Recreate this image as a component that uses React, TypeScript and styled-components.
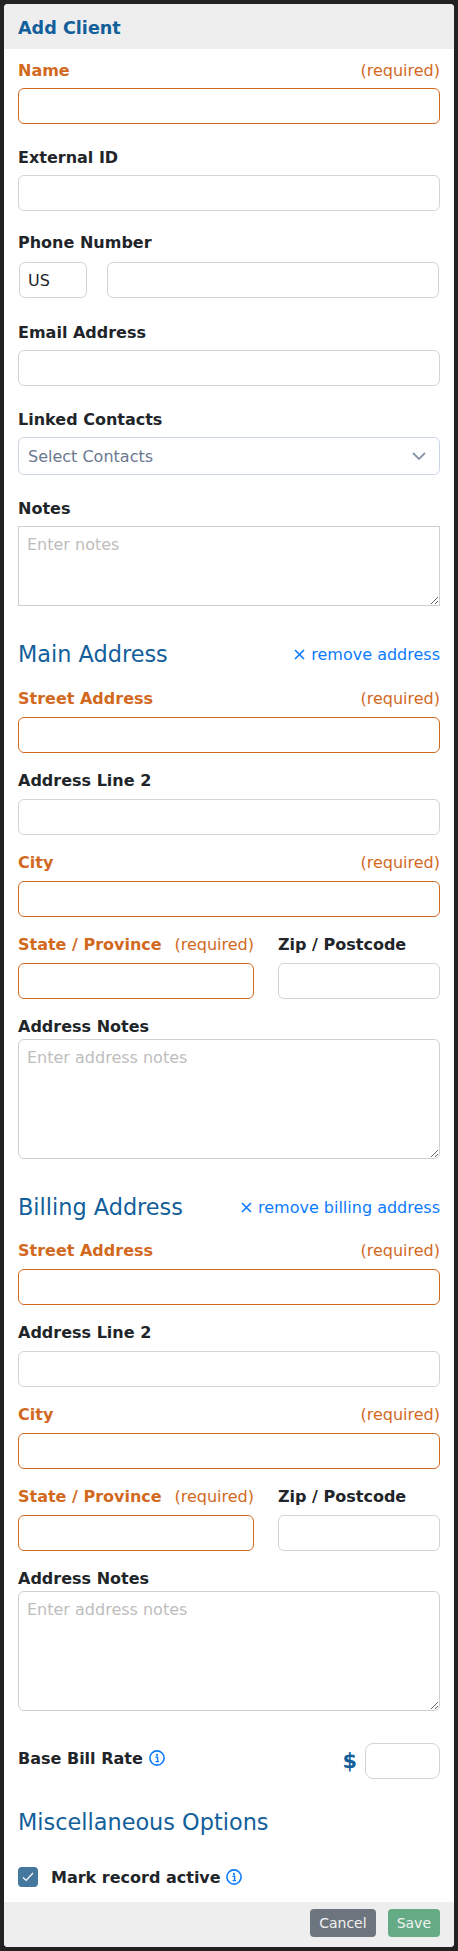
import React from "react";
import styled, { createGlobalStyle } from "styled-components";

const GlobalStyle = createGlobalStyle`
    * {
        box-sizing: border-box;
    }
    body {
        margin: 0;
        background: #222;
        font-family: "DejaVu Sans", sans-serif;
        color: #212529;
    }
`;

const Modal = styled.form`
    width: 458px;
    height: 1951px;
    border: 4px solid #222;
    border-radius: 8px;
    background: #fff;
    display: flex;
    flex-direction: column;
    overflow: hidden;
`;

const Header = styled.div`
    height: 45px;
    padding: 3px 14px 0;
    display: flex;
    align-items: center;
    background: #eee;
`;

const Title = styled.h5`
    margin: 0;
    font-size: 17.6px;
    font-weight: 700;
    color: #135f9b;
`;

const Body = styled.div`
    flex: 1;
    padding: 9px 14px 0;
`;

const Field = styled.div<{ $after?: number }>`
    margin-bottom: ${(p) => (p.$after === undefined ? 21 : p.$after)}px;
`;

const LabelRow = styled.div<{ $required?: boolean; $below?: number }>`
    height: 24px;
    margin-bottom: ${(p) => (p.$below === undefined ? 6 : p.$below)}px;
    display: flex;
    align-items: center;
    justify-content: space-between;
    font-size: 16px;
    color: ${(p) => (p.$required ? "#d2691e" : "#212529")};
`;

const LabelText = styled.label`
    font-weight: 700;
`;

const Required = styled.span`
    font-size: 16px;
`;

const Input = styled.input<{ $required?: boolean }>`
    display: block;
    width: 100%;
    height: 36px;
    padding: 0 8px;
    border: 1px solid ${(p) => (p.$required ? "#d2691e" : "#d4d4d4")};
    border-radius: 6px;
    outline: none;
    background: #fff;
    font-family: inherit;
    font-size: 16px;
    color: #212529;
`;

const PhoneRow = styled.div`
    display: flex;
    gap: 20px;
    padding: 0 1px;
`;

const CountryInput = styled(Input)`
    width: 68px;
    flex: none;
`;

const Select = styled.div`
    height: 38px;
    padding: 0 13px 0 9px;
    display: flex;
    align-items: center;
    justify-content: space-between;
    border: 1px solid #ccd5e5;
    border-radius: 6px;
    font-size: 16px;
    color: #6b7890;
`;

const Textarea = styled.textarea<{ $square?: boolean; $height: number }>`
    display: block;
    width: 100%;
    height: ${(p) => p.$height}px;
    padding: 7px 8px;
    border: 1px solid #d0d0d0;
    border-radius: ${(p) => (p.$square ? 0 : 6)}px;
    outline: none;
    font-family: inherit;
    font-size: 16px;
    line-height: 1.4;
    &::placeholder {
        color: #bdbdbd;
        opacity: 1;
    }
`;

const SectionHead = styled.div<{ $top: number; $bottom: number }>`
    height: 30px;
    margin-top: ${(p) => p.$top}px;
    margin-bottom: ${(p) => p.$bottom}px;
    display: flex;
    align-items: center;
    justify-content: space-between;
`;

const SectionTitle = styled.h4`
    margin: 0;
    font-size: 22.4px;
    font-weight: 400;
    color: #135f9b;
`;

const RemoveLink = styled.a`
    display: flex;
    align-items: center;
    gap: 6px;
    font-size: 16px;
    color: #0d7bff;
`;

const Columns = styled.div`
    display: flex;
    justify-content: space-between;
`;

const StateColumn = styled.div`
    width: 236px;
`;

const ZipColumn = styled.div`
    width: 162px;
`;

const RateRow = styled.div`
    display: flex;
    align-items: center;
    justify-content: space-between;
    margin-top: 32px;
`;

const RateLabel = styled.label`
    display: flex;
    align-items: center;
    gap: 6px;
    margin-bottom: 6px;
    font-size: 16px;
    font-weight: 700;
`;

const RateInputWrap = styled.div`
    display: flex;
    align-items: center;
    gap: 8px;
`;

const Dollar = styled.span`
    font-size: 20.8px;
    font-weight: 700;
    color: #135f9b;
`;

const RateInput = styled(Input)`
    width: 75px;
    border-radius: 8px;
`;

const CheckRow = styled.div`
    display: flex;
    align-items: center;
`;

const CheckBox = styled.span`
    width: 20px;
    height: 20px;
    margin-right: 13px;
    display: flex;
    align-items: center;
    justify-content: center;
    border-radius: 4px;
    background: #44789f;
`;

const CheckLabel = styled.label`
    display: flex;
    align-items: center;
    gap: 5px;
    font-size: 16px;
    font-weight: 700;
`;

const Footer = styled.div`
    height: 45px;
    padding: 7px 14px 0;
    display: flex;
    justify-content: flex-end;
    align-items: flex-start;
    gap: 12px;
    background: #eee;
`;

const Button = styled.button<{ $color: string }>`
    height: 28px;
    padding: 0 9px;
    border: none;
    border-radius: 4px;
    background: ${(p) => p.$color};
    color: #f2f2f2;
    font-family: inherit;
    font-size: 14px;
`;

const InfoIcon = () => (
    <svg width="16" height="16" viewBox="0 0 16 16" fill="none">
        <circle cx="8" cy="8" r="7.1" stroke="#0d7bff" strokeWidth="1.6" />
        <circle cx="8" cy="4.9" r="1.1" fill="#0d7bff" />
        <path
            d="M6.5 7.2H8.6V11.2M6.5 11.6H10"
            stroke="#0d7bff"
            strokeWidth="1.4"
        />
    </svg>
);

const CrossIcon = () => (
    <svg width="11" height="11" viewBox="0 0 11 11" fill="none">
        <path d="M1 1L10 10M10 1L1 10" stroke="#0d7bff" strokeWidth="1.6" />
    </svg>
);

const ChevronIcon = () => (
    <svg width="14" height="8" viewBox="0 0 14 8" fill="none">
        <path d="M1 1L7 7L13 1" stroke="#8a96a8" strokeWidth="1.8" />
    </svg>
);

const CheckIcon = () => (
    <svg width="12" height="10" viewBox="0 0 12 10" fill="none">
        <path d="M1 5.5L4.2 8.5L11 1" stroke="#fff" strokeWidth="1.2" />
    </svg>
);

function AddressFields() {
    return (
        <>
            <Field $after={15}>
                <LabelRow $required $below={7}>
                    <LabelText>Street Address</LabelText>
                    <Required>(required)</Required>
                </LabelRow>
                <Input $required />
            </Field>
            <Field $after={15}>
                <LabelRow $below={7}>
                    <LabelText>Address Line 2</LabelText>
                </LabelRow>
                <Input />
            </Field>
            <Field $after={15}>
                <LabelRow $required $below={7}>
                    <LabelText>City</LabelText>
                    <Required>(required)</Required>
                </LabelRow>
                <Input $required />
            </Field>
            <Field $after={15}>
                <Columns>
                    <StateColumn>
                        <LabelRow $required $below={7}>
                            <LabelText>State / Province</LabelText>
                            <Required>(required)</Required>
                        </LabelRow>
                        <Input $required />
                    </StateColumn>
                    <ZipColumn>
                        <LabelRow $below={7}>
                            <LabelText>Zip / Postcode</LabelText>
                        </LabelRow>
                        <Input />
                    </ZipColumn>
                </Columns>
            </Field>
            <Field $after={0}>
                <LabelRow $below={1}>
                    <LabelText>Address Notes</LabelText>
                </LabelRow>
                <Textarea $height={120} placeholder="Enter address notes" />
            </Field>
        </>
    );
}

function App() {
    return (
        <>
            <GlobalStyle />
            <Modal>
                <Header>
                    <Title>Add Client</Title>
                </Header>
                <Body>
                    <Field>
                        <LabelRow $required>
                            <LabelText>Name</LabelText>
                            <Required>(required)</Required>
                        </LabelRow>
                        <Input $required />
                    </Field>
                    <Field $after={19}>
                        <LabelRow>
                            <LabelText>External ID</LabelText>
                        </LabelRow>
                        <Input />
                    </Field>
                    <Field $after={22}>
                        <LabelRow $below={8}>
                            <LabelText>Phone Number</LabelText>
                        </LabelRow>
                        <PhoneRow>
                            <CountryInput defaultValue="US" />
                            <Input />
                        </PhoneRow>
                    </Field>
                    <Field>
                        <LabelRow>
                            <LabelText>Email Address</LabelText>
                        </LabelRow>
                        <Input />
                    </Field>
                    <Field>
                        <LabelRow>
                            <LabelText>Linked Contacts</LabelText>
                        </LabelRow>
                        <Select>
                            Select Contacts
                            <ChevronIcon />
                        </Select>
                    </Field>
                    <Field $after={0}>
                        <LabelRow>
                            <LabelText>Notes</LabelText>
                        </LabelRow>
                        <Textarea
                            $square
                            $height={80}
                            placeholder="Enter notes"
                        />
                    </Field>

                    <SectionHead $top={33} $bottom={17}>
                        <SectionTitle>Main Address</SectionTitle>
                        <RemoveLink>
                            <CrossIcon />
                            remove address
                        </RemoveLink>
                    </SectionHead>
                    <AddressFields />

                    <SectionHead $top={33} $bottom={16}>
                        <SectionTitle>Billing Address</SectionTitle>
                        <RemoveLink>
                            <CrossIcon />
                            remove billing address
                        </RemoveLink>
                    </SectionHead>
                    <AddressFields />

                    <RateRow>
                        <RateLabel>
                            Base Bill Rate
                            <InfoIcon />
                        </RateLabel>
                        <RateInputWrap>
                            <Dollar>$</Dollar>
                            <RateInput />
                        </RateInputWrap>
                    </RateRow>

                    <SectionHead $top={28} $bottom={30}>
                        <SectionTitle>Miscellaneous Options</SectionTitle>
                    </SectionHead>

                    <CheckRow>
                        <CheckBox>
                            <CheckIcon />
                        </CheckBox>
                        <CheckLabel>
                            Mark record active
                            <InfoIcon />
                        </CheckLabel>
                    </CheckRow>
                </Body>
                <Footer>
                    <Button type="button" $color="#6c757d">
                        Cancel
                    </Button>
                    <Button type="button" $color="#65ab86">
                        Save
                    </Button>
                </Footer>
            </Modal>
        </>
    );
}

export default App;
